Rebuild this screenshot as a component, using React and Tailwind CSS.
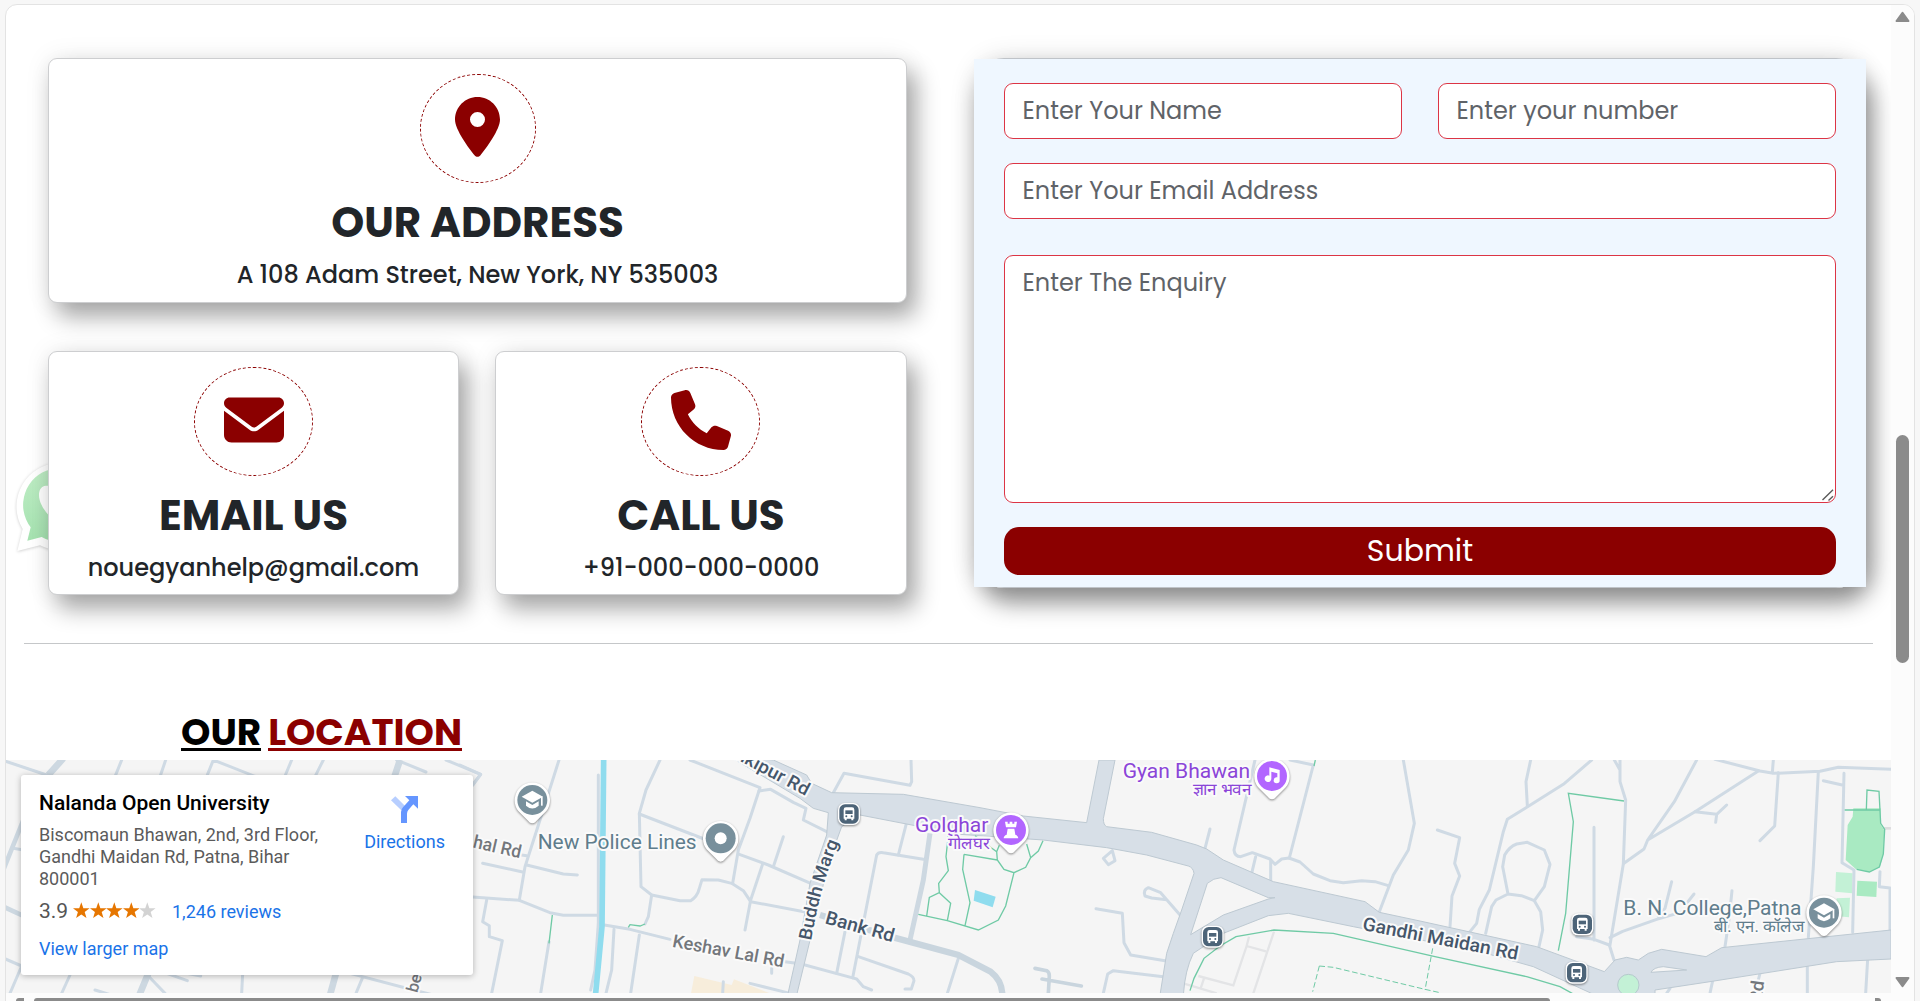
import React from "react";
import { FaLocationDot, FaEnvelope, FaPhone } from "react-icons/fa6";

const CARD =
  "h-[244.5px] rounded-[9px] border border-[#cdced0] bg-white flex flex-col items-center text-[#212529] shadow-[9px_14px_23px_rgba(0,0,0,0.33),0_0_26px_rgba(0,0,0,0.08)]";
const FIELD =
  "block w-full rounded-[9px] border border-[#dc3545] bg-white px-[17.5px] text-[24px] leading-[36px] text-black placeholder:text-[#5f6368] outline-none";

function ContactCard({ Icon, title, text, size, circle, width }) {
  return (
    <div className={CARD + " " + width}>
      <div
        className={
          "mt-[15px] flex h-[109px] items-center justify-center rounded-[50%] border border-dashed border-[#8b0000] pb-[3px] text-[#8b0000] " + circle
        }
      >
        <Icon className={size} />
      </div>
      <h3 className="mt-[15px] text-[42px] font-bold leading-[50px]">{title}</h3>
      <p className="mt-[9px] text-[24px] font-medium leading-[36px]">{text}</p>
    </div>
  );
}

function WhatsApp() {
  return (
    <svg className="absolute left-[8px] top-[450px] h-[100px] w-[100px]" viewBox="42 375 300 300">
      <defs>
        <linearGradient id="wa" x1="0" y1="0" x2="0" y2="1">
          <stop offset="0" stopColor="#bfedc5" />
          <stop offset="1" stopColor="#a5e2b0" />
        </linearGradient>
      </defs>
      <path
        d="M68 597A131 131 0 1 1 120 646L52 663Z"
        fill="#fff"
        className="drop-shadow-[0_2px_4px_rgba(0,0,0,0.2)]"
      />
      <path d="M92 592A111 111 0 1 1 125 621L82 632Z" fill="url(#wa)" />
      <path
        d="M133 468C118 472 114 492 119 510C128 545 175 595 220 600C240 600 250 588 250 570L222 556L208 570C185 562 168 545 160 525L170 510L157 472C150 466 140 467 133 468Z"
        fill="#fff"
      />
    </svg>
  );
}

function Pin({ x, y, color, children }) {
  return (
    <g transform={`translate(${x} ${y})`}>
      <path
        d="M0 70C-6 70-10 66-15 60L-42 33A53 53 0 1 1 42 33L15 60C10 66 6 70 0 70Z"
        fill="#fff"
        className="drop-shadow-[0_3px_3px_rgba(0,0,0,0.45)]"
      />
      <circle r="45" fill={color} />
      {children}
    </g>
  );
}

function Cap() {
  return (
    <g fill="#fff">
      <path d="M0-28L32-10L0 8L-32-10Z" />
      <path d="M26-10H31V17H26Z" />
      <path d="M-19 4L0 15L19 4V17Q0 34-19 17Z" />
    </g>
  );
}

function Bus({ x, y }) {
  return (
    <g transform={`translate(${x} ${y})`}>
      <rect x="-33" y="-33" width="66" height="66" rx="20" fill="#fff" className="drop-shadow-[0_3px_3px_rgba(0,0,0,0.45)]" />
      <rect x="-29" y="-29" width="58" height="58" rx="17" fill="#4d6478" />
      <path
        d="M-9-20H9Q16-20 16-13V14H13V19H7V14H-7V19H-13V14H-16V-13Q-16-20-9-20Z"
        fill="#fff"
      />
      <path d="M-11-11H11V0H-11Z" fill="#4d6478" />
      <circle cx="-8" cy="7" r="3" fill="#4d6478" />
      <circle cx="8" cy="7" r="3" fill="#4d6478" />
    </g>
  );
}

const HALO = { paintOrder: "stroke", stroke: "#fafafa", strokeWidth: 12, strokeLinejoin: "round" };

function Label({ x, y, w, r = 0, size = 54, fill, weight = 400, anchor = "start", children }) {
  return (
    <text
      transform={`translate(${x} ${y}) rotate(${r})`}
      textLength={w}
      lengthAdjust="spacingAndGlyphs"
      fontSize={size}
      fontWeight={weight}
      fill={fill}
      textAnchor={anchor}
      {...HALO}
    >
      {children}
    </text>
  );
}

const WEST_ROADS = [
  "M0 58L140 105", "M365 60L345 110", "M497 60L480 110", "M640 60L620 110M640 60L780 115",
  "M875 60L850 120", "M970 60L945 110", "M1190 60L1278 96", "M1338 60L1442 103L1418 135",
  "M40 325L70 330", "M0 650L65 678L30 760", "M210 705L185 760", "M445 708L495 760M500 700L562 722M560 700L602 708",
  "M285 750L350 770", "M728 700L725 760", "M1050 700L1240 750L1320 770M1088 712L1068 760",
];
const MID_ROADS = [
  "M0 75L62 103L38 135", "M297 60L240 240L195 380L178 480", "M68 370L188 396", "M185 345L200 347M200 375L310 402L352 405",
  "M38 471L178 481L270 518L310 526H413", "M80 480L68 545L88 557V590L127 602L95 760", "M267 605L242 760",
  "M415 105V550L405 690L392 750", "M415 552L510 568L630 598", "M462 568L455 690L438 760", "M538 585L512 760",
  "M600 60L558 150L538 220L543 440L575 465L660 482H692Q712 470 718 445L726 419L775 420L815 430L850 452L872 485L1040 517",
  "M575 465L565 530L555 552", "M538 222L740 300", "M690 60L900 143L870 235L835 330L818 430", "M897 153L932 148L1000 187L1038 205L1030 240L1100 275",
  "M838 343L925 375L1052 430", "M970 290L940 380", "M907 375L872 480L855 570", "M870 730L990 760", "M975 665L1025 672M935 685V700",
  "M790 725L788 760", "M1035 675L1175 713L1190 717L1210 740L1235 750", "M1155 575L1130 700", "M1178 713L1250 345Q1255 335 1270 338L1390 358",
  "M1343 235L1315 345", "M1195 650L1345 702Q1362 710 1362 722L1354 747H1335", "M1495 655L1462 760", "M1120 158L1152 100L1350 136L1355 125L1353 60",
];
const CENTRAL_ROADS = [
  "M885 60L822 330Q824 350 842 350L877 338L930 357L945 373L965 357L987 354L1020 366L1060 402L1110 422L1150 428L1205 422L1245 425L1285 437",
  "M990 60L1060 75L988 354", "M887 350L875 400M932 362V425", "M750 267L735 325", "M1330 60L1363 250L1345 330L1300 405L1258 515",
  "M457 332L430 355L445 374L465 362L457 332", "M662 527L602 458L565 443Q548 450 555 468L575 474L620 479",
  "M408 506L487 520L492 608L512 645L615 662", "M430 760L443 702L460 692L610 710",
];
const DARK_LANES = "M225 685L260 692Q268 696 268 708L265 760M246 717L364 738";
const EAST_ROADS = [
  "M52 270L119 293L104 370L119 408L96 468L90 560", "M332 60L318 125L322 197", "M515 60L430 133L262 238L250 275L208 450L178 508L170 550L150 575",
  "M264 462L248 380L254 345Q268 320 290 312L322 307L373 330L390 373L373 440L343 482L304 467L264 462L228 480L215 500L197 580",
  "M343 482L362 515L368 570L357 620", "M522 262V600M470 590L522 598L568 615L582 660", "M600 60V125L617 180L610 372L570 615M583 60L600 90",
  "M830 60L763 185L683 300L672 327L612 370M683 300L825 215L1015 93", "M825 215L890 223L920 195M890 223L887 247",
  "M885 58L1020 93L1060 100L1200 94L1255 82L1413 88", "M1060 60L1057 98M1075 98L1064 258L1020 302", "M1195 95L1180 380L1165 592",
  "M1210 122L1270 136M1272 100L1266 368L1302 390L1298 577", "M570 593L608 574L710 538L790 515", "M755 425L735 505L715 530M822 462L800 490",
  "M936 452L928 530L915 620", "M1380 395L1378 440L1410 444V575", "M1162 680V760M1343 657L1337 760M878 722L870 760M1020 700L1015 720M750 745L740 760",
];

function Roads({ x, paths }) {
  return (
    <g transform={`translate(${x} 0)`} fill="none" stroke="#cfdae4" strokeWidth="9" strokeLinejoin="round" strokeLinecap="round">
      {paths.map((d) => (
        <path key={d} d={d} />
      ))}
    </g>
  );
}

function CityMap() {
  return (
    <svg className="absolute inset-0 h-full w-full font-['Roboto',sans-serif]" viewBox="-2862 60 5655 699" preserveAspectRatio="none">
      <rect x="-2862" y="60" width="5655" height="699" fill="#f5f5f5" />
      <g transform="translate(-1500 0)">
        <path d="M703 708L815 735L822 718L930 760H693Z" fill="#f7eddb" />
        <path d="M1545 450L1607 470L1598 502L1541 482Z" fill="#8fdcee" />
      </g>
      <g transform="translate(1380 0)">
        <path d="M1300 205H1382V255L1393 270L1390 340L1380 380L1350 395L1308 388L1277 360L1283 255L1298 230Z" fill="#a9eac2" />
        <path d="M1248 396L1298 400L1296 460L1246 455ZM1250 475L1290 473L1287 532L1245 528Z" fill="#c3f1d6" />
        <path d="M1312 422L1371 425L1369 471L1310 467Z" fill="#a9eac2" />
        <path d="M1390 265H1413" stroke="#dddddf" strokeWidth="8" />
      </g>
      <g fill="none" stroke="#e3e4e6" strokeWidth="7">
        <path d="M867 590L860 618L918 634M942 575L880 760M860 618L820 736L715 708M732 715L722 745M670 730L770 760" />
      </g>
      <Roads x={-2880} paths={WEST_ROADS} />
      <Roads x={-1500} paths={MID_ROADS} />
      <Roads x={0} paths={CENTRAL_ROADS} />
      <Roads x={1380} paths={EAST_ROADS} />
      <path d={DARK_LANES} fill="none" stroke="#c9d5de" strokeWidth="11" strokeLinecap="round" />
      <g transform="translate(-2880 0)" fill="none" stroke="#cdd8e1" strokeWidth="20">
        <path d="M190 55L145 105M1200 60L1180 120M1008 700L990 765M445 700L418 765" />
        <path d="M70 240L10 390M10 500L75 530" strokeWidth="14" />
      </g>
      <g transform="translate(-1500 0)" fill="none">
        <path d="M431 60L426 560L407 760" stroke="#8fdcee" strokeWidth="17" />
        <path d="M1410 280L1390 420L1350 600" stroke="#cdd8e1" strokeWidth="15" />
        <path d="M1080 525L1300 592L1495 645L1592 695Q1625 720 1627 762" stroke="#c9d5de" strokeWidth="19" />
      </g>
      <path
        d="M-560 60L-460 105L-445 130L-385 158L-300 160L-170 163L60 203L190 228L380 248L417 60H465L430 236Q430 255 440 260L575 277L710 315L740 327L790 360L940 425L1215 485L1258 517L1380 543L1730 620L1933 695L1965 660L2000 652L2035 660L2065 640L2105 628L2238 650L2285 623L2793 570V657L2630 665L2250 725L2085 750V765H1905L1720 680L1560 635L1180 560L985 520L925 527L790 580L700 640Q675 690 670 765H600L620 640L640 580L665 510L702 400Q700 383 685 378L560 345L440 323L250 300L0 283L-300 225L-355 260L-395 370L-440 560L-490 765H-517L-480 600L-450 430L-400 285L-395 218L-440 205L-480 175L-690 50Z"
        fill="#d7dfe7"
        stroke="#bdc9d2"
        strokeWidth="3"
      />
      <path d="M783 413L925 473H945L925 477L790 525L692 584L742 430Q760 414 783 413Z" fill="#f5f5f5" stroke="#bdc9d2" strokeWidth="3" />
      <g transform="translate(1380 0)">
        <path d="M693 697Q700 682 730 680L800 690Z" fill="#f5f5f5" stroke="#bdc9d2" strokeWidth="3" />
        <circle cx="625" cy="735" r="32" fill="#c3f1d6" stroke="#b5c9cd" strokeWidth="3" />
      </g>
      <g fill="none" stroke="#6fcaa5" strokeWidth="4">
        <path d="M-1223 525L-1233 610M-995 562L-990 554L-960 558L-945 552" />
        <path d="M-35 285L-42 350L-35 392L-64 430L-62 458L-92 472L-100 528M-62 458L-28 490L-38 542M-125 523L-38 542L55 570L115 540L137 498L162 398M12 343L8 388L30 488L15 557M12 343L112 360M118 316L110 335L112 360L132 388L162 398L197 382L212 353L200 312M212 353L235 333L249 302M45 287L110 335" />
        <path d="M690 752L702 715L732 655L780 618L828 590L942 570L1120 580L1425 650L1700 710L1800 740L1840 762M1066 60L1062 78" />
        <path d="M1418 625L1395 750M1078 678L1058 755M1078 678L1120 682L1395 748L1440 758" strokeDasharray="17 8" strokeWidth="3" />
        <path d="M1795 632L1817 520L1840 245L1825 160L1992 183M2654 210H2762M2719 210L2721 150L2757 154L2762 250L2774 268L2770 342L2758 381L2728 396L2690 388" />
      </g>

      <Label x={-463} y={168} r={28} w={310} size={54} weight={500} anchor="end" fill="#45566a">Bankipur Rd</Label>
      <path id="marg" d="M-447 602C-430 510-412 420-358 292" fill="none" />
      <text fontSize="54" fontWeight="500" fill="#45566a" {...HALO}>
        <textPath href="#marg" textLength="308" lengthAdjust="spacingAndGlyphs">Buddh Marg</textPath>
      </text>
      <Label x={-407} y={550} r={15.5} w={212} size={56} weight={500} fill="#45566a">Bank Rd</Label>
      <Label x={-865} y={620} r={10.5} w={340} size={54} weight={500} fill="#73777c">Keshav Lal Rd</Label>
      <Label x={-1463} y={322} r={13} w={146} size={54} weight={500} fill="#73777c">hal Rd</Label>
      <Label x={-1628} y={760} r={-75} w={55} size={50} weight={500} fill="#73777c">be</Label>
      <Label x={1205} y={569} r={11} w={475} size={56} weight={500} fill="#45566a">Gandhi Maidan Rd</Label>
      <Label x={2413} y={724} r={-82} w={68} size={54} weight={500} anchor="end" fill="#73777c">Rd</Label>
      <Label x={-1267} y={326} w={477} size={63} fill="#5f7d8c">New Police Lines</Label>
      <Label x={-135} y={277} w={220} size={63} fill="#8b45d8">Golghar</Label>
      <Label x={-36} y={326} w={126} size={49} fill="#8b45d8">गोलघर</Label>
      <Label x={488} y={115} w={382} size={63} fill="#8b45d8">Gyan Bhawan</Label>
      <Label x={698} y={166} w={176} size={49} fill="#8b45d8">ज्ञान भवन</Label>
      <Label x={1990} y={524} w={534} size={63} fill="#5f7d8c">B. N. College,Patna</Label>
      <Label x={2262} y={575} w={270} size={49} fill="#5f7d8c">बी. एन. कॉलेज</Label>

      <Pin x={-1283} y={180} color="#78909c"><Cap /></Pin>
      <Pin x={-718} y={295} color="#78909c"><circle r="18" fill="#fff" /></Pin>
      <Pin x={153} y={270} color="#b266ff">
        <path d="M-18-25H-10V-19H-4V-25H4V-19H10V-25H18L15-8H-15ZM-10-4H10L13 14Q22 17 22 25H-22Q-22 17-13 14Z" fill="#fff" />
      </Pin>
      <Pin x={936} y={108} color="#b266ff">
        <path d="M-8-26L23-18V12A9 9 0 1 1 16 4V-8L-2-13V8A10 10 0 1 1-8-1Z" fill="#fff" />
      </Pin>
      <Pin x={2592} y={518} color="#78909c"><Cap /></Pin>
      <Bus x={-333} y={222} />
      <Bus x={758} y={590} />
      <Bus x={1867} y={553} />
      <Bus x={1850} y={698} />
    </svg>
  );
}

function Star({ on }) {
  return (
    <svg className="h-[17px] w-[16.6px]" viewBox="0 0 24 24">
      <path
        d="M12 0L15 8.6L24 8.8L16.9 14.2L19.5 23L12 17.8L4.5 23L7.1 14.2L0 8.8L9 8.6Z"
        className={on ? "fill-[#e67600]" : "fill-[#d3d3d3]"}
      />
    </svg>
  );
}

function PlaceCard() {
  return (
    <div className="absolute left-[15px] top-[15px] flex h-[200px] w-[452px] justify-between rounded-[3px] bg-white pl-[18px] font-['Roboto',sans-serif] text-[18px] leading-[22px] text-[#1a73e8] shadow-[0_1px_6px_rgba(0,0,0,0.28)]">
      <div className="flex flex-col pt-[16px]">
        <div className="text-[21px] font-medium leading-[24px] text-black">Nalanda Open University</div>
        <div className="mt-[9px] w-[290px] text-[#5b5b5b]">Biscomaun Bhawan, 2nd, 3rd Floor, Gandhi Maidan Rd, Patna, Bihar 800001</div>
        <div className="mt-[9px] flex h-[24px] items-center">
          <span className="w-[34px] text-[21px] leading-[24px] text-[#555]">3.9</span>
          <div className="mb-[2px] flex w-[99px]">
            <Star on /><Star on /><Star on /><Star on /><Star />
          </div>
          <span className="pt-[1px]">1,246 reviews</span>
        </div>
        <div className="mt-[15px]">View larger map</div>
      </div>
      <div className="mr-[28px] flex flex-col items-center pt-[21px]">
        <svg className="h-[27px] w-[27px]" viewBox="0 0 81 81">
          <path d="M0 13L13 1L43 31L31 43Z" fill="#b7ceff" />
          <path d="M42 0H81V38L67 25L52 42Q48 46 48 54V81H30V48Q30 40 36 34L55 13Z" fill="#6596ff" />
        </svg>
        <div className="mt-[8px]">Directions</div>
      </div>
    </div>
  );
}

export default function App() {
  return (
    <div className="h-[1001px] w-[1920px] overflow-hidden bg-[#f7f7f7] pl-[5px] pt-[4px] font-['Poppins',sans-serif]">
      <div className="flex h-[1010px] w-[1910px] overflow-hidden rounded-[12px] border border-[#e3e3e3] bg-white">
        <div className="relative flex h-[996px] w-[1885px] flex-col overflow-hidden">
          <WhatsApp />
          <div className="relative flex h-[590px] pl-[42px] pt-[53px]">
            <div className="flex w-[859px] flex-col gap-[48px]">
              <ContactCard Icon={FaLocationDot} title="OUR ADDRESS" text="A 108 Adam Street, New York, NY 535003" size="h-[60px] w-[45px]" circle="w-[116px]" width="w-full" />
              <div className="flex justify-between">
                <ContactCard Icon={FaEnvelope} title="EMAIL US" text="nouegyanhelp@gmail.com" size="h-[60px] w-[60px]" circle="w-[119px]" width="w-[411px]" />
                <ContactCard Icon={FaPhone} title="CALL US" text="+91-000-000-0000" size="h-[60px] w-[60px]" circle="w-[119px] mr-px" width="w-[412px]" />
              </div>
            </div>
            <div className="ml-[67px] h-[530px] w-[892px] rounded-[30px] border-y border-[#bfc3c8] shadow-[6px_15px_23px_rgba(0,0,0,0.42),0_0_26px_rgba(0,0,0,0.12)]">
              <form className="flex h-full flex-col bg-[#eff7ff] px-[30px] pt-[24px]" onSubmit={(e) => e.preventDefault()}>
                <div className="flex gap-[36px]">
                  <input className={FIELD + " h-[56px] pb-[2px]"} placeholder="Enter Your Name" />
                  <input className={FIELD + " h-[56px] pb-[2px]"} placeholder="Enter your number" />
                </div>
                <input className={FIELD + " mt-[24px] h-[56px] pb-[2px]"} placeholder="Enter Your Email Address" />
                <div className="relative mt-[36px]">
                  <textarea className={FIELD + " h-[248px] resize-none py-[9px]"} placeholder="Enter The Enquiry" />
                  <svg className="absolute bottom-[2px] right-[2px] h-[12px] w-[12px]" viewBox="0 0 12 12">
                    <path d="M0.5 11L11 0.8M6.5 11.5L11 7.2" fill="none" stroke="#5a5a5a" strokeWidth="1.4" />
                  </svg>
                </div>
                <button className="mt-[24px] h-[48px] rounded-[15px] bg-[#8b0000] text-[30px] leading-[48px] text-white">Submit</button>
              </form>
            </div>
          </div>
          <div className="mx-[18px] mt-[48px] h-px shrink-0 bg-[#c5c7c9]" />
          <h2 className="ml-[175px] mt-[66px] flex h-[50px] gap-[7px] text-[37.4px] font-bold leading-[45px]">
            <span className="h-[41px] border-b-[3px] border-black text-black">OUR</span>
            <span className="h-[41px] border-b-[3px] border-[#8b0000] text-[#8b0000]">LOCATION</span>
          </h2>
          <div className="relative h-[233px] overflow-hidden">
            <CityMap />
            <PlaceCard />
          </div>
          <div className="flex h-[8px] items-end bg-[#fcfcfc]">
            <div className="ml-[10px] h-[3px] w-[8px] rounded-tl-full bg-[#8b8b8b]" />
            <div className="ml-[10px] h-[3px] w-[1516px] rounded-t-[4px] bg-[#8b8b8b]" />
            <div className="ml-[325px] h-[3px] w-[6px] rounded-tr-full bg-[#8b8b8b]" />
          </div>
        </div>
        <div className="flex h-[996px] w-[23px] flex-col items-center bg-[#fcfcfc]">
          <svg className="mt-[6px] h-[12px] w-[15px]" viewBox="0 0 15 12">
            <path d="M7.5 1.8L13.5 10H1.5Z" fill="#8b8b8b" stroke="#8b8b8b" strokeWidth="2" strokeLinejoin="round" />
          </svg>
          <div className="mt-[412px] h-[228px] w-[13px] rounded-full bg-[#8b8b8b]" />
          <svg className="mt-[313px] h-[12px] w-[15px]" viewBox="0 0 15 12">
            <path d="M7.5 10.2L13.5 2H1.5Z" fill="#8b8b8b" stroke="#8b8b8b" strokeWidth="2" strokeLinejoin="round" />
          </svg>
        </div>
      </div>
    </div>
  );
}
